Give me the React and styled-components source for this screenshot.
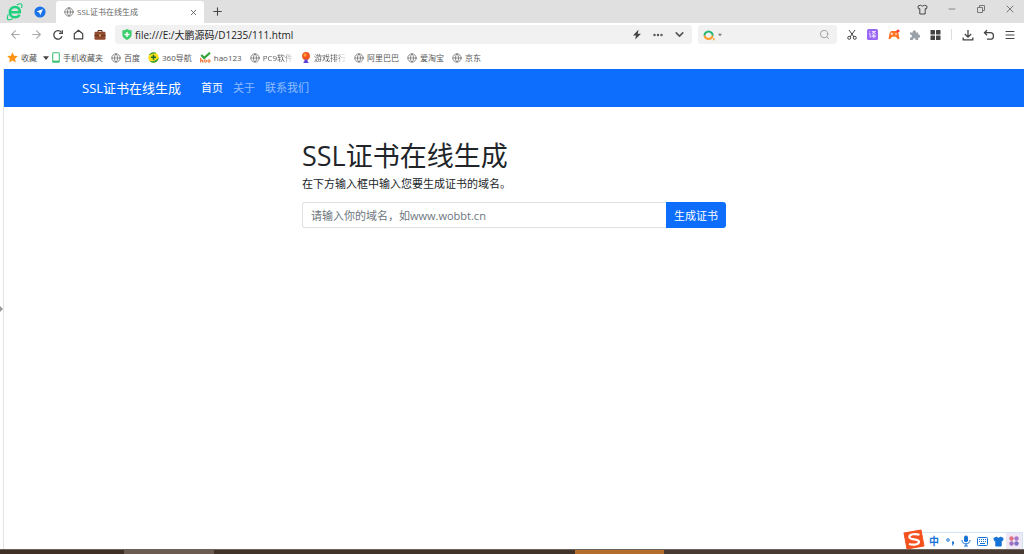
import React, { useState } from 'react';
import styled, { createGlobalStyle, css } from 'styled-components';
import {
  ArrowLeft,
  ArrowRight,
  ChevronDown,
  Ellipsis,
  Globe,
  Menu,
  Minus,
  Plus,
  Search,
  X,
} from 'lucide-react';

const GlobalStyle = createGlobalStyle`
  * {
    box-sizing: border-box;
  }

  body {
    margin: 0;
    font-family: 'Open Sans', 'Noto Sans CJK SC', sans-serif;
    font-size: 11px;
    color: #212529;
    background: #fff;
  }

  button,
  input {
    font-family: inherit;
  }
`;

const Window = styled.div`
  position: relative;
  min-height: 100vh;
  display: flex;
  flex-direction: column;
`;

const TitleBar = styled.div`
  height: 23px;
  padding: 0 0 0 6px;
  display: flex;
  align-items: center;
  background: #e0e0e0;
`;

const Tab = styled.div`
  width: 148px;
  height: 22px;
  margin-top: 1px;
  padding: 0 4px 0 8px;
  display: flex;
  align-items: center;
  gap: 3px;
  border-radius: 3px 3px 0 0;
  background: #fff;
`;

const TabTitle = styled.span`
  flex: 1;
  font-size: 8px;
  line-height: 12px;
  color: #666;
  white-space: nowrap;
`;

const IconButton = styled.button`
  flex: none;
  width: ${({ $width }) => $width || 21}px;
  height: 18px;
  padding: 0;
  border: none;
  background: none;
  display: flex;
  align-items: center;
  justify-content: center;
  color: ${({ $color }) => $color || '#444'};
`;

const WindowButtons = styled.div`
  margin-left: auto;
  display: flex;
  align-self: flex-start;
`;

const ToolBar = styled.div`
  height: 23px;
  padding: 0 4px 0 5px;
  display: flex;
  align-items: center;
`;

const AddressBox = styled.div`
  flex: 1;
  min-width: 0;
  height: 19px;
  margin: 0 6px 0 5px;
  padding: 0 2px 0 7px;
  display: flex;
  align-items: center;
  gap: 3px;
  border-radius: 3px;
  background: #f1f1f1;
`;

const SearchBox = styled(AddressBox)`
  flex: 0 0 139px;
  margin: 0 4px 0 0;
  padding: 0 2px 0 5px;
`;

const BarInput = styled.input`
  flex: 1;
  min-width: 0;
  padding: 0;
  border: none;
  outline: none;
  background: none;
  font-size: 10px;
  line-height: 16px;
  color: #222;
`;

const Divider = styled.span`
  width: 1px;
  height: 11px;
  margin: 0 5px;
  background: #ddd;
`;

const BookmarkBar = styled.nav`
  height: 23px;
  padding: 0 7px;
  display: flex;
  align-items: center;
  gap: 3px;
`;

const BookmarkGroup = styled.div`
  display: flex;
  align-items: center;
  gap: ${({ $gap }) => $gap}px;
`;

const Bookmark = styled.a`
  display: flex;
  align-items: center;
  gap: 3px;
  font-size: 8px;
  line-height: 12px;
  color: #555;
  white-space: nowrap;
  text-decoration: none;

  svg {
    flex: none;
  }
`;

const BookmarkName = styled.span`
  ${({ $fade }) =>
    $fade &&
    css`
      background: linear-gradient(90deg, #555 65%, #eee);
      background-clip: text;
      color: transparent;
    `}
`;

const Viewport = styled.div`
  flex: 1;
  display: flex;
`;

const SideStrip = styled.div`
  width: 4px;
  border-right: 1px solid #e4e4e4;
  display: flex;
  align-items: center;
`;

const Page = styled.div`
  flex: 1;
  min-width: 0;
`;

const NavBar = styled.header`
  height: 38px;
  display: flex;
  align-items: center;
  background: #0d6efd;
`;

const NavContainer = styled.div`
  width: 100%;
  max-width: 880px;
  margin: 0 auto;
  padding: 0 8px;
  display: flex;
  align-items: center;
`;

const Brand = styled.a`
  margin-right: 20px;
  font-size: 13px;
  line-height: 20px;
  color: #fff;
  white-space: nowrap;
  text-decoration: none;
`;

const NavLinks = styled.nav`
  display: flex;
  gap: 10px;
`;

const NavLink = styled.a`
  line-height: 16px;
  color: ${({ $active }) => ($active ? '#fff' : 'rgba(255, 255, 255, 0.55)')};
  white-space: nowrap;
  text-decoration: none;
`;

const Main = styled.main`
  width: 100%;
  max-width: 440px;
  margin: 0 auto;
  padding: 33px 8px;
`;

const Heading = styled.h1`
  margin: 0 0 4px;
  font-size: 27px;
  font-weight: 400;
  line-height: 32px;
`;

const Description = styled.p`
  margin: 0 0 10px;
  line-height: 16px;
`;

const DomainForm = styled.form`
  display: flex;
`;

const DomainInput = styled.input`
  flex: 1;
  min-width: 0;
  height: 26px;
  padding: 0 8px;
  border: 1px solid #dee2e6;
  border-right: none;
  border-radius: 3px 0 0 3px;
  outline: none;
  font-size: 11px;
  color: #212529;

  &::placeholder {
    color: #6c757d;
    opacity: 1;
  }
`;

const SubmitButton = styled.button`
  height: 26px;
  padding: 0 8px;
  border: none;
  border-radius: 0 3px 3px 0;
  background: #0d6efd;
  font-size: 11px;
  color: #fff;
`;

const TaskBar = styled.div`
  height: 5px;
  display: grid;
  grid-template-columns: 124fr 90fr 361fr 89fr 360fr;
  border-top: 1px solid #6b625b;
`;

const TaskItem = styled.span`
  background: ${({ $color }) => $color};
`;

const InputMethod = styled.div`
  position: absolute;
  right: 1px;
  bottom: 5px;
  height: 17px;
  padding-left: 23px;
  display: flex;
  align-items: center;
  border: 1px solid #cfe3f7;
  border-left: none;
  border-bottom: none;
  background: #fff;
`;

const SogouLogo = styled.svg`
  position: absolute;
  left: 0;
  bottom: -1px;
`;

const ImeButton = styled.button`
  width: 16px;
  height: 16px;
  padding: 0;
  border: none;
  background: ${({ $tint }) => ($tint ? '#f1e8f6' : 'none')};
  display: flex;
  align-items: center;
  justify-content: center;
  font-size: 10px;
  font-weight: 700;
  line-height: 16px;
  color: #1673d6;
`;

const GlobeIcon = () => <Globe size={10} strokeWidth={2} color="#777" />;

const BrowserLogo = () => (
  <svg width="18" height="18" viewBox="0 0 18 18" fill="none">
    <path
      d="M4.2 9.200h9.600c.1-3.200-1.700-5.200-4.700-5.200-3.100 0-5.200 2.200-5.200 5.200s2.100 5.100 5 5.100c2.200 0 3.800-.9 4.600-2.600"
      stroke="#1fd17c"
      strokeWidth="2.500"
    />
    <path
      d="M2.300 11.200C.8 14.600 1 16.900 3 16.800c1.200 0 2.500-.5 3.800-1.300M10.800 1.900c2.300-1.200 4.400-1.400 5-.3.500.8.300 2-.5 3.400"
      stroke="#1fd17c"
      strokeWidth="1.200"
    />
  </svg>
);

const PlaneIcon = () => (
  <svg width="12" height="12" viewBox="0 0 12 12">
    <circle cx="6" cy="6" r="5.600" fill="#1a73e8" />
    <path d="M9 3 2.700 5.600l2.600 1 1 2.700z" fill="#fff" />
  </svg>
);

const ShirtIcon = ({ fill = 'none' }) => (
  <svg width="11" height="11" viewBox="0 0 11 11" fill={fill} stroke="currentColor" strokeLinejoin="round">
    <path d="M3.600 1 .9 2.300l.6 2.500 1.300-.2V10h5.400V4.600l1.300.2.600-2.500L7.400 1C6.900 2.400 4.100 2.400 3.600 1z" />
  </svg>
);

const ReloadIcon = () => (
  <svg width="12" height="12" viewBox="0 0 12 12" fill="none" stroke="#444" strokeWidth="1.300">
    <path d="M10 7.200A4.200 4.200 0 1 1 9.300 3.300" />
    <path d="M10.300 1.200v3.200H7" />
  </svg>
);

const HomeIcon = () => (
  <svg width="11" height="11" viewBox="0 0 11 11" fill="none" stroke="#444" strokeWidth="1.200">
    <path d="M1.300 4.800 5.500 1.300l4.200 3.500v5H1.300z" strokeLinejoin="round" />
  </svg>
);

const BriefcaseIcon = () => (
  <svg width="12" height="12" viewBox="0 0 12 12">
    <path d="M4 3V1.500h4V3" fill="none" stroke="#5b2b1c" />
    <rect x=".5" y="2.800" width="11" height="8" rx="1" fill="#8f4a2e" />
    <path d="M.5 6h11v1H.5z" fill="#6b3421" />
    <path d="M5.200 5.500h1.600v1.800H5.200z" fill="#e8c27a" />
  </svg>
);

const ShieldIcon = () => (
  <svg width="10" height="11" viewBox="0 0 10 11">
    <path d="M5 0c1.200.9 2.800 1.200 4.600 1.200V6c0 2.200-2 3.800-4.600 5C2.400 9.800.4 8.200.4 6V1.200C2.200 1.200 3.800.9 5 0z" fill="#3ecf6e" />
    <path d="M5 3v5M2.500 5.500h5" stroke="#fff" strokeWidth="1.400" />
  </svg>
);

const BoltIcon = () => (
  <svg width="10" height="11" viewBox="0 0 10 11">
    <path d="M6.600.4 1 6.400h3L3.200 10.600 9 4.700H5.800z" fill="#444" />
  </svg>
);

const EngineIcon = () => (
  <svg width="12" height="12" viewBox="0 0 12 12" fill="none" strokeWidth="2">
    <path d="M1.400 6.800a4.200 4.200 0 1 1 8.400 0" stroke="#25b573" />
    <path d="M1.600 6.800a4.100 4.100 0 0 0 8 0" stroke="#ff9d2e" />
    <path d="M10 10.200h1.500" stroke="#ff9d2e" />
  </svg>
);

const Caret = ({ size = 6, color = '#444' }) => (
  <svg width={size} height={size} viewBox="0 0 6 6">
    <path d="M0 1.300h6L3 5z" fill={color} />
  </svg>
);

const CutIcon = () => (
  <svg width="10" height="11" viewBox="0 0 10 11" fill="none" stroke="#444">
    <path d="M2 1l5 7M8 1L3 8" />
    <circle cx="2.200" cy="8.800" r="1.500" />
    <circle cx="7.800" cy="8.800" r="1.500" />
  </svg>
);

const TranslateIcon = () => (
  <svg width="11" height="11" viewBox="0 0 11 11">
    <rect width="11" height="11" rx="1.500" fill="#9a66f5" />
    <path
      d="M2.200 2.500l1 .8M1.800 4.600h1.300v3.600l1-.8M4.800 2.500h3.800L4.900 5M5.300 2.800l3.500 2.100M4.800 6.300h4M4.500 7.700h4.600M6.800 5v4.300"
      fill="none"
      stroke="#fff"
      strokeWidth=".7"
    />
  </svg>
);

const GamepadIcon = () => (
  <svg width="12" height="12" viewBox="0 0 12 12">
    <path d="M3 2h6l1.500 2.500 1 5.300c-1.300 1-2.200.3-3.500-2H4C2.700 10.100 1.800 10.800.5 9.800l1-5.300z" fill="#ff7423" />
    <path d="M3.800 3.700v2.400M2.600 4.900H5" stroke="#fff" strokeWidth=".8" />
    <circle cx="8" cy="5" r=".8" fill="#fff" />
    <circle cx="10" cy="2" r="1.600" fill="#f33c3c" />
  </svg>
);

const PuzzleIcon = () => (
  <svg width="12" height="12" viewBox="0 0 12 12">
    <path d="M1 3.500h2.800a1.600 1.600 0 1 1 3 0h2.400v2.200a1.500 1.500 0 1 1 0 2.900V11H6.600a1.400 1.400 0 1 0-2.700 0H1V8.300a1.400 1.400 0 1 0 0-2.600z" fill="#9ba1a9" />
  </svg>
);

const TilesIcon = () => (
  <svg width="11" height="10" viewBox="0 0 11 10" fill="#444">
    <rect x=".5" width="4.500" height="4.500" rx=".6" />
    <rect x="6" width="4.500" height="4.500" rx=".6" />
    <rect x=".5" y="5.500" width="4.500" height="4.500" rx=".6" />
    <rect x="6" y="5.500" width="4.500" height="4.500" rx=".6" />
  </svg>
);

const DownloadIcon = () => (
  <svg width="12" height="12" viewBox="0 0 12 12" fill="none" stroke="#444" strokeWidth="1.300">
    <path d="M6 1v7M2.800 5 6 8.200 9.200 5M1.200 8.500v2.300h9.600V8.500" />
  </svg>
);

const RestoreTabIcon = () => (
  <svg width="12" height="12" viewBox="0 0 12 12" fill="none" stroke="#444" strokeWidth="1.300">
    <path d="M4 1.200 1.500 3.700 4 6.200M1.800 3.700h5.400a3.200 3.200 0 0 1 0 6.500H4" />
  </svg>
);

const RestoreIcon = () => (
  <svg width="8" height="8" viewBox="0 0 8 8" fill="none" stroke="#777">
    <path d="M.5 2.500h5v5h-5z" />
    <path d="M2.500 2V.5h5v5H6" />
  </svg>
);

const StarIcon = () => (
  <svg width="11" height="11" viewBox="0 0 11 11">
    <path d="M5.500.3 7.100 3.700l3.700.4-2.700 2.600.7 3.800-3.300-1.900-3.300 1.900.7-3.800L.2 4.100l3.700-.4z" fill="#ff9414" />
  </svg>
);

const PhoneIcon = () => (
  <svg width="8" height="11" viewBox="0 0 8 11">
    <rect x=".7" y=".7" width="6.600" height="9.600" rx=".8" fill="none" stroke="#42c277" strokeWidth="1.100" />
    <path d="M1 8.600h6v1.500H1z" fill="#42c277" />
  </svg>
);

const Nav360Icon = () => (
  <svg width="11" height="11" viewBox="0 0 11 11">
    <circle cx="5.500" cy="5.500" r="5.200" fill="#ffe11a" />
    <path d="M.8 3.600C1.500 1.600 3.300.3 5.500.3c1.200 0 2.300.4 3.200 1C6 1.200 3.300 1.800.8 3.600zM10.600 5.800c-.1 2.900-2.300 4.900-5.100 4.900-1.600 0-3-.7-4-1.900 3.200.9 6.600.2 9.100-3z" fill="#2f9e3f" />
    <path d="M5.500 2.800v5M3 5.300h5" stroke="#176b2b" strokeWidth="1.500" />
  </svg>
);

const HaoIcon = () => (
  <svg width="11" height="11" viewBox="0 0 11 11" fill="none">
    <path d="M1.300 3 4.200 6 10 .8" stroke="#2fa537" strokeWidth="2.200" />
    <path d="M.7 5.800v4.700M.7 8.500c1.300-.8 2-.3 2 .5v1.500" stroke="#f36b26" strokeWidth="1.100" />
    <circle cx="5.300" cy="9" r="1.200" stroke="#f36b26" strokeWidth="1" />
    <circle cx="9" cy="9" r="1.200" stroke="#f36b26" strokeWidth="1" />
  </svg>
);

const BalloonIcon = () => (
  <svg width="10" height="11" viewBox="0 0 10 11">
    <circle cx="5" cy="4" r="3.900" fill="#f4511e" />
    <circle cx="4" cy="3" r="1.700" fill="#ff9c35" />
    <path d="M3.500 7.500h3V9l1.300 2H2.200l1.300-2z" fill="#5a43d6" />
  </svg>
);

const bookmarks = [
  { name: '手机收藏夹', icon: PhoneIcon },
  { name: '百度', icon: GlobeIcon },
  { name: '360导航', icon: Nav360Icon },
  { name: 'hao123', icon: HaoIcon },
  { name: 'PC9软件', icon: GlobeIcon, fade: true },
  { name: '游戏排行', icon: BalloonIcon, fade: true },
  { name: '阿里巴巴', icon: GlobeIcon },
  { name: '爱淘宝', icon: GlobeIcon },
  { name: '京东', icon: GlobeIcon },
];

const taskColors = ['#402f25', '#6b5b50', '#41322a', '#b56d2e', '#463a32'];

const BrowserChrome = () => {
  const [url, setUrl] = useState('file:///E:/大鹏源码/D1235/111.html');

  return (
    <>
      <TitleBar>
        <BrowserLogo />
        <IconButton type="button" aria-label="导航" $width={32}>
          <PlaneIcon />
        </IconButton>
        <Tab>
          <GlobeIcon />
          <TabTitle>SSL证书在线生成</TabTitle>
          <IconButton type="button" aria-label="关闭标签" $width={14}>
            <X size={9} />
          </IconButton>
        </Tab>
        <IconButton type="button" aria-label="新标签" $width={26}>
          <Plus size={13} />
        </IconButton>
        <WindowButtons>
          <IconButton type="button" aria-label="皮肤" $width={29}>
            <ShirtIcon />
          </IconButton>
          <IconButton type="button" aria-label="最小化" $width={29} $color="#777">
            <Minus size={10} />
          </IconButton>
          <IconButton type="button" aria-label="还原" $width={29}>
            <RestoreIcon />
          </IconButton>
          <IconButton type="button" aria-label="关闭" $width={29} $color="#777">
            <X size={12} strokeWidth={2} />
          </IconButton>
        </WindowButtons>
      </TitleBar>

      <ToolBar>
        <IconButton type="button" aria-label="后退" $color="#aaa">
          <ArrowLeft size={13} />
        </IconButton>
        <IconButton type="button" aria-label="前进" $color="#aaa">
          <ArrowRight size={13} />
        </IconButton>
        <IconButton type="button" aria-label="刷新">
          <ReloadIcon />
        </IconButton>
        <IconButton type="button" aria-label="主页">
          <HomeIcon />
        </IconButton>
        <IconButton type="button" aria-label="工具箱">
          <BriefcaseIcon />
        </IconButton>
        <AddressBox>
          <ShieldIcon />
          <BarInput
            aria-label="地址"
            value={url}
            onChange={(e) => setUrl(e.target.value)}
          />
          <IconButton type="button" aria-label="极速模式">
            <BoltIcon />
          </IconButton>
          <IconButton type="button" aria-label="更多" $width={16} $color="#555">
            <Ellipsis size={12} strokeWidth={3} />
          </IconButton>
          <IconButton type="button" aria-label="展开" $color="#555">
            <ChevronDown size={13} strokeWidth={3} />
          </IconButton>
        </AddressBox>
        <SearchBox>
          <EngineIcon />
          <Caret size={4} color="#777" />
          <BarInput aria-label="搜索" />
          <IconButton type="button" aria-label="搜索按钮" $color="#999">
            <Search size={11} />
          </IconButton>
        </SearchBox>
        <IconButton type="button" aria-label="截图">
          <CutIcon />
        </IconButton>
        <IconButton type="button" aria-label="翻译">
          <TranslateIcon />
        </IconButton>
        <IconButton type="button" aria-label="游戏">
          <GamepadIcon />
        </IconButton>
        <IconButton type="button" aria-label="扩展">
          <PuzzleIcon />
        </IconButton>
        <IconButton type="button" aria-label="应用">
          <TilesIcon />
        </IconButton>
        <Divider />
        <IconButton type="button" aria-label="下载">
          <DownloadIcon />
        </IconButton>
        <IconButton type="button" aria-label="恢复">
          <RestoreTabIcon />
        </IconButton>
        <IconButton type="button" aria-label="菜单">
          <Menu size={12} strokeWidth={2} />
        </IconButton>
      </ToolBar>

      <BookmarkBar>
        <BookmarkGroup $gap={6}>
          <Bookmark href="#">
            <StarIcon />
            收藏
          </Bookmark>
          <Caret />
        </BookmarkGroup>
        <BookmarkGroup $gap={8}>
          {bookmarks.map(({ name, icon: Icon, fade }) => (
            <Bookmark href="#" key={name}>
              <Icon />
              <BookmarkName $fade={fade}>{name}</BookmarkName>
            </Bookmark>
          ))}
        </BookmarkGroup>
      </BookmarkBar>
    </>
  );
};

const App = () => {
  const [domain, setDomain] = useState('');

  return (
    <Window>
      <GlobalStyle />
      <BrowserChrome />

      <Viewport>
        <SideStrip>
          <svg width="3" height="6" viewBox="0 0 3 6">
            <path d="M0 0l3 3-3 3z" fill="#999" />
          </svg>
        </SideStrip>
        <Page>
          <NavBar>
            <NavContainer>
              <Brand href="#">SSL证书在线生成</Brand>
              <NavLinks>
                <NavLink href="#" $active>
                  首页
                </NavLink>
                <NavLink href="#">关于</NavLink>
                <NavLink href="#">联系我们</NavLink>
              </NavLinks>
            </NavContainer>
          </NavBar>
          <Main>
            <Heading>SSL证书在线生成</Heading>
            <Description>在下方输入框中输入您要生成证书的域名。</Description>
            <DomainForm onSubmit={(e) => e.preventDefault()}>
              <DomainInput
                aria-label="域名"
                placeholder="请输入你的域名，如www.wobbt.cn"
                value={domain}
                onChange={(e) => setDomain(e.target.value)}
              />
              <SubmitButton type="submit">生成证书</SubmitButton>
            </DomainForm>
          </Main>
        </Page>
      </Viewport>

      <TaskBar>
        {taskColors.map((color) => (
          <TaskItem key={color} $color={color} />
        ))}
      </TaskBar>

      <InputMethod>
        <SogouLogo width="22" height="21" viewBox="0 0 22 21">
          <path d="M1 4 18 1l3 16L4 20z" fill="#f4511e" stroke="#f4511e" strokeLinejoin="round" />
          <path
            d="M16.500 5.800C12 4.300 6.300 5.200 6.300 8c0 3.200 9.700 1.500 9.700 4.800 0 2.800-5.500 3.600-10 2.200"
            fill="none"
            stroke="#fff"
            strokeWidth="2.200"
          />
        </SogouLogo>
        <ImeButton type="button">中</ImeButton>
        <ImeButton type="button" aria-label="标点">
          <svg width="9" height="9" viewBox="0 0 9 9">
            <circle cx="2" cy="3" r="1.300" fill="none" stroke="#1673d6" />
            <path d="M6 4.500h2v2L6.800 8.500H6l.5-2H6z" fill="#1673d6" />
          </svg>
        </ImeButton>
        <ImeButton type="button" aria-label="语音">
          <svg width="10" height="12" viewBox="0 0 10 12">
            <rect x="3" y=".5" width="4" height="6.800" rx="2" fill="#1673d6" />
            <path d="M1 5c0 2.500 1.500 3.800 4 3.800S9 7.500 9 5M5 9v2M3 11h4" fill="none" stroke="#1673d6" />
          </svg>
        </ImeButton>
        <ImeButton type="button" aria-label="键盘">
          <svg width="11" height="9" viewBox="0 0 11 9" fill="none" stroke="#1673d6">
            <rect x=".5" y=".5" width="10" height="8" rx="1" />
            <path d="M2 2.500h7M2 4.500h7" strokeDasharray="1 1" />
            <path d="M3 6.500h5" />
          </svg>
        </ImeButton>
        <ImeButton type="button" aria-label="换肤">
          <ShirtIcon fill="#1673d6" />
        </ImeButton>
        <ImeButton type="button" aria-label="工具" $tint>
          <svg width="10" height="10" viewBox="0 0 10 10">
            <circle cx="2.500" cy="2.500" r="2.200" fill="#e0707f" />
            <circle cx="7.500" cy="2.500" r="2.200" fill="#a578cc" />
            <circle cx="2.500" cy="7.500" r="2.200" fill="#a06fc0" />
            <circle cx="7.500" cy="7.500" r="2.200" fill="#7f6fc2" />
          </svg>
        </ImeButton>
      </InputMethod>
    </Window>
  );
};

export default App;
